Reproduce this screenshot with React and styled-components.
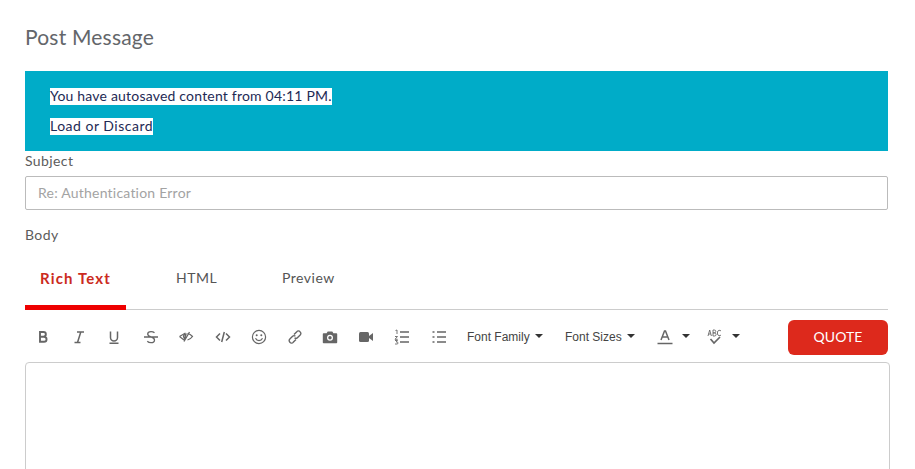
import React from "react";
import styled, { createGlobalStyle } from "styled-components";

const Global = createGlobalStyle`
  html, body { margin: 0; padding: 0; height: 469px; overflow: hidden; background: #fff; }
  body { font-family: "Lato", "Open Sans", "Liberation Sans", sans-serif; color: #555; }
`;
const Page = styled.div`
  width: 915px; height: 469px; overflow: hidden; box-sizing: border-box; padding: 23px 27px 0 25px;
  display: flex; flex-direction: column;
`;
const Title = styled.h1`
  margin: 0 0 21px; font-size: 21px; line-height: 27px; font-weight: 400; color: #63666a; letter-spacing: 0.2px;
`;
const Banner = styled.div`
  height: 80px; flex: none; box-sizing: border-box; background: #00acc8; padding: 17px 25px 0;
  display: flex; flex-direction: column; gap: 13px; align-items: flex-start;
`;
const Notice = styled.span`
  background: #fff; color: #1e2a55; font-size: 14px; line-height: 15px; padding-bottom: 2px; letter-spacing: ${p => p.$ls}px; white-space: nowrap;
`;
const Label = styled.label`
  display: block; font-size: 14px; line-height: 20px; color: #5c5c5c; letter-spacing: 0.4px;
`;
const BodyLabel = styled(Label)`margin-top: 15px;`;
const Input = styled.input`
  display: block; width: 100%; height: 34px; flex: none; box-sizing: border-box; margin-top: 5px; padding: 0 12px 2px;
  border: 1px solid #bbb; border-radius: 2px; font: 14px "Lato", sans-serif; letter-spacing: 0.22px; color: #555; outline: none;
  &::placeholder { color: #a3a3a3; opacity: 1; }
`;
const Tabs = styled.div`
  display: flex; height: 61px; flex: none; margin-top: 4px; border-bottom: 1px solid #ccc; box-sizing: border-box;
`;
const Tab = styled.div`
  box-sizing: border-box; width: ${p => p.$w}px; height: 61px; padding: 19px 0 0 ${p => p.$pl}px;
  font-size: ${p => (p.$active ? 15 : 14)}px; line-height: 20px; letter-spacing: ${p => (p.$active ? 1.15 : 0.5)}px;
  font-weight: ${p => (p.$active ? 700 : 400)};
  color: ${p => (p.$active ? "#cb2a20" : "#555")};
  border-bottom: ${p => (p.$active ? "5px solid #ee0000" : "none")};
`;
const ToolbarRow = styled.div`
  display: flex; align-items: center; height: 52px; flex: none; padding-left: 10px;
`;
const IconBtn = styled.span`
  width: ${p => p.$w || 36}px; flex: none; display: flex; align-items: center; color: #666; margin-top: 2px;
  svg { display: block; }
`;
const Dropdown = styled.span`
  display: inline-flex; align-items: center; gap: 5px; font: 12px "Liberation Sans", sans-serif; color: #444;
  width: ${p => p.$w}px; flex: none; white-space: nowrap; margin-top: 2px;
`;
const Caret = styled.i`
  display: inline-block; width: 0; height: 0; border-left: 4px solid transparent; border-right: 4px solid transparent;
  border-top: 4px solid #333; margin-top: -2px;
`;
const Quote = styled.button`
  margin-left: auto; margin-top: 3px; width: 100px; height: 35px; flex: none; border: 0; border-radius: 6px; background: #dd291c; color: #fff;
  font: 14px "Lato", sans-serif; letter-spacing: 0.1px; padding: 0 0 2px;
`;
const Editor = styled.div`
  width: 865px; height: 200px; flex: none; box-sizing: border-box; border: 1px solid #ccc; border-radius: 4px; background: #fff;
`;

const Svg = ({ children, w = 16, h = 16, ...r }) => (
  <svg width={w} height={h} viewBox={`0 0 ${w} ${h}`} fill="none" stroke="currentColor" strokeWidth="1.4" {...r}>{children}</svg>
);

const icons = [
  [<Svg><path d="M5 3h3.500a2.300 2.300 0 0 1 0 4.700H5zM5 7.700h4a2.500 2.500 0 0 1 0 5.100H5z" strokeWidth="1.900" /></Svg>, 36],
  [<Svg><path d="M6 3h7M3.500 13.500h6M9.800 3 6.500 13.500" strokeWidth="1.500" /></Svg>, 35],
  [<Svg><path d="M4.500 2.500v6a3.500 3.500 0 0 0 7 0v-6M3.500 14.200h9" strokeWidth="1.500" /></Svg>, 37],
  [<Svg><path d="M11.500 3.800C10.600 3 9.300 2.600 8 2.600 6 2.600 4.700 3.500 4.700 5c0 3.400 6.800 2.200 6.800 5.900 0 1.700-1.500 2.700-3.500 2.700-1.500 0-2.800-.5-3.700-1.400M1 8h14" strokeWidth="1.300" /></Svg>, 35],
  [<Svg><path d="M1.500 7.500 7.500 4M1.500 7.500 6 11M9.500 4.500c2 .4 3.700 1.500 5 3-1.300 1.800-3 3-5 3.500" strokeWidth="1.200" /><path d="M6 12.500 11.500 3M5.500 7.500a2.500 2.500 0 0 1 2.500-2.300L6.500 10z" strokeWidth="1.300" /></Svg>, 37],
  [<Svg><path d="M5 4.500 1.500 8 5 11.500M11 4.500 14.500 8 11 11.500M9.300 3 6.700 13" strokeWidth="1.500" /></Svg>, 36],
  [<Svg><circle cx="8" cy="8" r="6.600" strokeWidth="1.200" /><circle cx="5.700" cy="6.200" r="1" fill="currentColor" stroke="none" /><circle cx="10.300" cy="6.200" r="1" fill="currentColor" stroke="none" /><path d="M4.500 9.300c.7 1.500 2 2.300 3.500 2.300s2.800-.8 3.500-2.300" strokeWidth="1.200" /></Svg>, 36],
  [<Svg><path d="M7 5.500 9.800 2.700a2 2 0 0 1 3.200 0l.2.200a2 2 0 0 1 0 3L10.400 8.700a2 2 0 0 1-2.800 0M9 10.500 6.200 13.300a2 2 0 0 1-3.200 0l-.2-.2a2 2 0 0 1 0-3L5.600 7.300a2 2 0 0 1 2.800 0" strokeWidth="1.400" /></Svg>, 35],
  [<Svg><path d="M5.700 2.500h4.600l1.100 1.700h3a.8.800 0 0 1 .8.800v8.400a.8.800 0 0 1-.8.800H1.600a.8.800 0 0 1-.8-.8V5a.8.800 0 0 1 .8-.8h3z" fill="currentColor" stroke="none" /><circle cx="8" cy="8.800" r="3" fill="#fff" stroke="none" /><circle cx="8" cy="8.800" r="1.700" fill="currentColor" stroke="none" /></Svg>, 36],
  [<Svg><rect x="1" y="3" width="10" height="10" rx="1.500" fill="currentColor" stroke="none" /><path d="M11 7l4-3v8l-4-3z" fill="currentColor" stroke="none" /></Svg>, 36],
  [<Svg><path d="M6 3h9M6 8h9M6 13h9" strokeWidth="1.500" /><path d="M1.500 1.500 3 1v4M1 7.500h2.500L1 10.300h2.700M1 11.500h2.500L2.200 13h.8a1 1 0 0 1 0 2H1" strokeWidth=".9" /></Svg>, 37],
  [<Svg><path d="M6 3h9M6 8h9M6 13h9" strokeWidth="1.500" /><path d="M1.500 3h2M1.500 8h2M1.500 13h2" strokeWidth="1.700" /></Svg>, 36],
];

export default function App() {
  return (
    <Page>
      <Global />
      <Title>Post Message</Title>
      <Banner>
        <Notice $ls={0.2}>You have autosaved content from 04:11 PM.</Notice>
        <Notice $ls={0.5}>Load or Discard</Notice>
      </Banner>
      <Label>Subject</Label>
      <Input placeholder="Re: Authentication Error" />
      <BodyLabel>Body</BodyLabel>
      <Tabs>
        <Tab $active $w={101} $pl={15}>Rich Text</Tab>
        <Tab $w={106} $pl={50}>HTML</Tab>
        <Tab $w={100} $pl={50}>Preview</Tab>
      </Tabs>
      <ToolbarRow>
        {icons.map(([icon, w], i) => <IconBtn key={i} $w={w}>{icon}</IconBtn>)}
        <Dropdown $w={98}>Font Family <Caret /></Dropdown>
        <Dropdown $w={91}>Font Sizes <Caret /></Dropdown>
        <IconBtn $w={51}>
          <Svg w={18} h={18} style={{ marginRight: 8 }}><path d="M5 12 8.500 3h1L13 12M6.200 9h5.600" strokeWidth="1.500" /><path d="M1.500 15.500h15" strokeWidth="1.500" /></Svg>
          <Caret />
        </IconBtn>
        <IconBtn $w={40}>
          <Svg w={16} h={16} style={{ marginRight: 9 }}><path d="M1 7 2.700 1 4.400 7M1.600 5h2.200M6 1v6M6 1h1.300a1.400 1.400 0 0 1 0 2.900H6M6 3.900h1.500a1.500 1.500 0 0 1 0 3.100H6M14 2a2 2 0 0 0-3.500 1v2a2 2 0 0 0 3.500 1" strokeWidth=".9" /><path d="M3.500 10 7 14l6-6" strokeWidth="1.700" /></Svg>
          <Caret />
        </IconBtn>
        <Quote>QUOTE</Quote>
      </ToolbarRow>
      <Editor />
    </Page>
  );
}
